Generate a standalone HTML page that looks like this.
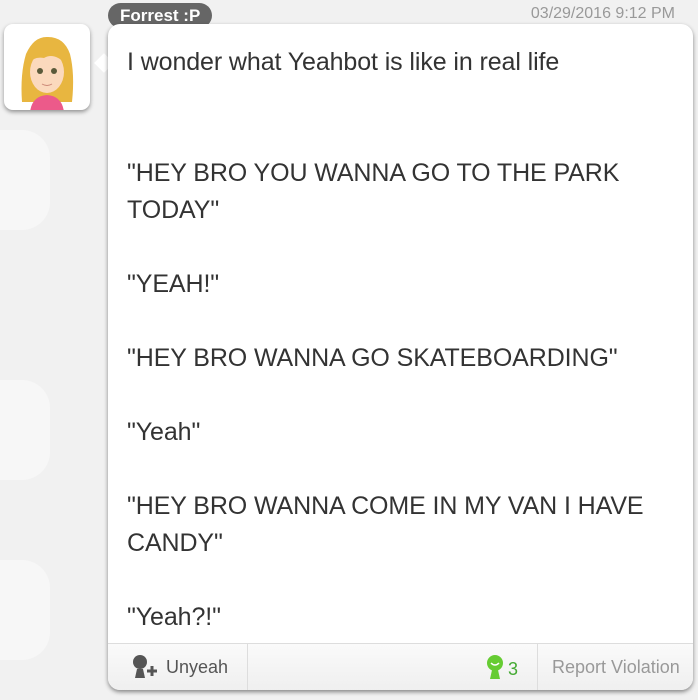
<!DOCTYPE html>
<html><head><style>
body{margin:0;width:698px;height:700px;overflow:hidden;background:#f1f1f1;font-family:"Liberation Sans",sans-serif;position:relative}
.tile{position:absolute;background:#f7f7f7;border-radius:28px;width:80px;height:100px}
.card{position:absolute;left:108px;top:24px;width:585px;height:666px;background:#fff;border-radius:12px;box-shadow:0 2px 4px rgba(0,0,0,.45);overflow:hidden}
.text{position:absolute;left:19px;top:20px;font-size:25px;line-height:37px;color:#333;letter-spacing:-0.1px}
.foot{position:absolute;left:0;right:0;top:619px;height:47px;background:linear-gradient(#fafafa,#efefef);border-top:1px solid #ddd}
.name{position:absolute;left:108px;top:3px;height:25px;padding:0 12px;background:#666;color:#fff;border-radius:13px;font-size:17px;line-height:26px;font-weight:bold}
.date{position:absolute;right:23px;top:5px;color:#999;font-size:16px}
.av{position:absolute;left:4px;top:24px;width:86px;height:86px;background:#fff;border-radius:9px;box-shadow:0 2px 4px rgba(0,0,0,.4);overflow:hidden}
.tail{position:absolute;left:97px;top:56px;width:14px;height:14px;background:#fff;transform:rotate(45deg)}
.f{font-size:18px}
</style></head><body>
<div class="tile" style="left:-30px;top:130px"></div>
<div class="tile" style="left:-30px;top:380px"></div>
<div class="tile" style="left:-30px;top:560px"></div>
<div class="name">Forrest :P</div>
<div class="date">03/29/2016 9:12 PM</div>
<div class="av">
<svg width="86" height="86" viewBox="0 0 86 86">
<path d="M18 78 Q16 50 22 30 Q30 12 44 13 Q60 13 66 30 Q71 50 68 78 Z" fill="#e8b640"/>
<path d="M26 88 Q28 72 43 71 Q58 72 60 88Z" fill="#ec5a8a"/>
<ellipse cx="43" cy="48" rx="17" ry="21" fill="#fbd9bd"/>
<path d="M24 40 Q32 18 48 20 Q62 24 62 40 Q50 28 40 34 Q30 32 24 40Z" fill="#e8b640"/>
<circle cx="36" cy="47" r="3" fill="#5a5a3a"/><circle cx="50" cy="47" r="3" fill="#5a5a3a"/>
<path d="M38 60 Q43 63 48 60" stroke="#c87" fill="none"/>
</svg></div>
<div class="tail"></div>
<div class="card">
<div class="text">I wonder what Yeahbot is like in real life<br><br><br>"HEY BRO YOU WANNA GO TO THE PARK<br>TODAY"<br><br>"YEAH!"<br><br>"HEY BRO WANNA GO SKATEBOARDING"<br><br>"Yeah"<br><br>"HEY BRO WANNA COME IN MY VAN I HAVE<br>CANDY"<br><br>"Yeah?!"</div>
<div class="foot">
<div style="position:absolute;left:139px;top:0;bottom:0;border-left:1px solid #ddd"></div>
<div style="position:absolute;left:429px;top:0;bottom:0;border-left:1px solid #ddd"></div>
<svg style="position:absolute;left:22px;top:10px" width="30" height="26" viewBox="0 0 30 26"><circle cx="10" cy="8" r="7" fill="#555"/><path d="M5 24 L7 15 H13 L15 24Z" fill="#555"/><path d="M17 17h10M22 12v10" stroke="#555" stroke-width="3"/></svg>
<div class="f" style="position:absolute;left:58px;top:13px;color:#555">Unyeah</div>
<svg style="position:absolute;left:377px;top:10px" width="20" height="26" viewBox="0 0 20 26"><circle cx="10" cy="9" r="8" fill="#6c3"/><path d="M5 25 L7 16 H13 L15 25Z" fill="#6c3"/><path d="M6 9 Q10 13 14 9" stroke="#fff" fill="none" stroke-width="1.5"/></svg>
<div class="f" style="position:absolute;left:400px;top:15px;color:#4a3">3</div>
<div class="f" style="position:absolute;left:444px;top:13px;color:#999">Report Violation</div>
</div></div>
</body></html>
